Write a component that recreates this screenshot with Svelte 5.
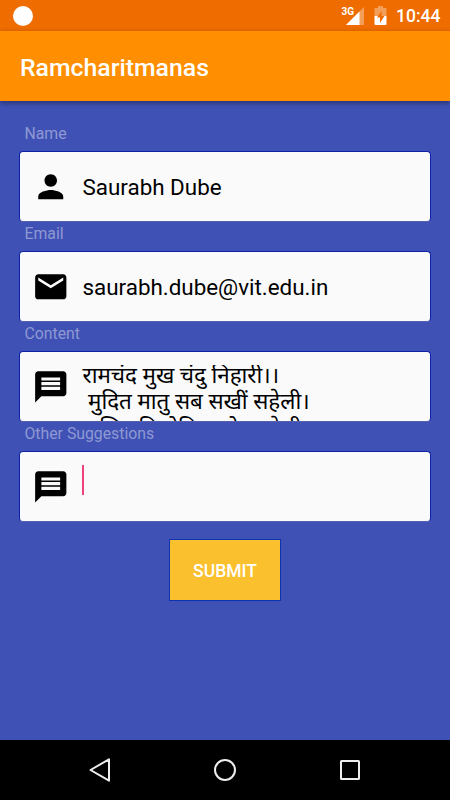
<script lang="ts">
  const icons = {
    person: 'M12 12c2.21 0 4-1.79 4-4s-1.79-4-4-4-4 1.79-4 4 1.79 4 4 4zm0 2c-2.67 0-8 1.34-8 4v2h16v-2c0-2.66-5.33-4-8-4z',
    email: 'M20 4H4c-1.1 0-1.99.9-1.99 2L2 18c0 1.1.9 2 2 2h16c1.1 0 2-.9 2-2V6c0-1.1-.9-2-2-2zm0 4l-8 5-8-5V6l8 5 8-5v2z',
    message: 'M20 2H4c-1.1 0-1.99.9-1.99 2L2 22l4-4h14c1.1 0 2-.9 2-2V4c0-1.1-.9-2-2-2zm-2 12H6v-2h12v2zm0-3H6V9h12v2zm0-3H6V6h12v2z',
  }

  const fields = [
    { label: 'Name', icon: icons.person, value: 'Saurabh Dube' },
    { label: 'Email', icon: icons.email, value: 'saurabh.dube@vit.edu.in' },
    {
      label: 'Content',
      icon: icons.message,
      lines: ['रामचंद मुख चंदु निहारी।।', ' मुदित मातु सब सखीं सहेली।', 'फलित बिलोकि मनोरथ बेली।।'],
    },
    { label: 'Other Suggestions', icon: icons.message, focused: true },
  ]
</script>

<div class="screen">
  <div class="status-bar">
    <span class="notif"></span>
    <svg class="signal" width="24" height="25" viewBox="0 0 24 25">
      <path d="M23 7v18H5z" fill="#fff" opacity="0.35" />
      <path d="M18.5 11.5V25H5z" fill="#fff" />
      <text x="0.5" y="14.8">3G</text>
    </svg>
    <svg class="battery" width="13" height="19" viewBox="0 0 13 19">
      <path d="M4 0h5v2h2.5q1 0 1 1v7H.5V3q0-1 1-1H4z" fill="#fff" opacity="0.35" />
      <path d="M.5 10h12v8q0 1-1 1h-10q-1 0-1-1z" fill="#fff" />
      <path d="M7.5 5L3 11.5h3V17l4.5-7h-3z" fill="#ef6c00" />
    </svg>
    <span class="clock">10:44</span>
  </div>

  <header class="app-bar">
    <h1>Ramcharitmanas</h1>
  </header>

  <main>
    {#each fields as field}
      <div class="label">{field.label}</div>
      <div class="field">
        <svg class="icon" viewBox="0 0 24 24"><path d={field.icon} /></svg>
        {#if field.lines}
          <div class="multiline">
            {#each field.lines as line}
              <div class="line">{line}</div>
            {/each}
          </div>
        {:else if field.focused}
          <span class="caret"></span>
        {:else}
          <span class="value">{field.value}</span>
        {/if}
      </div>
    {/each}
    <button class="submit">SUBMIT</button>
  </main>

  <nav class="nav-bar">
    <svg width="24" height="26" viewBox="0 0 24 26"><path d="M21 2.3v21.4L2.5 13z" /></svg>
    <svg width="24" height="26" viewBox="0 0 24 26"><circle cx="12" cy="13" r="10" /></svg>
    <svg width="24" height="26" viewBox="0 0 24 26"><rect x="3" y="4" width="18" height="18" rx="0.5" /></svg>
  </nav>
</div>

<style>
  :global(body) {
    background: #3f51b5;
  }

  .screen {
    width: 450px;
    height: 800px;
    display: flex;
    flex-direction: column;
    overflow: hidden;
    background: #3f51b5;
    font-family: Roboto, 'Noto Sans', sans-serif;
  }

  .status-bar {
    height: 31px;
    flex-shrink: 0;
    display: flex;
    align-items: flex-start;
    background: #ef6c00;
    color: #fff;
  }

  .notif {
    width: 20px;
    height: 20px;
    margin: 6px auto 0 12.5px;
    border-radius: 50%;
    background: #fff;
  }

  .signal {
    margin-right: 9px;
    overflow: visible;
  }

  .signal text {
    font-size: 10px;
    font-weight: 700;
    fill: #fff;
  }

  .battery {
    margin: 6px 9px 0 0;
  }

  .clock {
    width: 44px;
    margin-right: 10px;
    font-size: 17.5px;
    font-weight: 500;
    line-height: 33px;
  }

  .app-bar {
    height: 70px;
    flex-shrink: 0;
    padding: 0 20px;
    display: flex;
    align-items: center;
    background: #ff8f00;
    box-shadow: 0 2px 5px rgba(0, 0, 0, 0.4);
    z-index: 1;
  }

  h1 {
    margin: 2px 0 0;
    color: #fff;
    font-size: 24.8px;
    font-weight: 500;
  }

  main {
    flex: 1;
    padding: 21px 19px 0;
    display: flex;
    flex-direction: column;
  }

  .label {
    height: 29px;
    padding-left: 5.5px;
    color: #8e99d3;
    font-size: 15.8px;
    line-height: 23px;
  }

  .field {
    height: 69px;
    display: flex;
    align-items: flex-start;
    overflow: hidden;
    background: #fafafa;
    border: 1px solid #0d22a8;
    border-bottom-color: #5560b0;
    border-radius: 4px;
  }

  .icon {
    width: 37.5px;
    height: 37.5px;
    margin: 16px 12.8px 0 12.2px;
    flex-shrink: 0;
  }

  .value {
    color: #000;
    font-size: 22.4px;
    line-height: 70px;
  }

  .multiline {
    height: 56px;
    margin-top: 13px;
    overflow: hidden;
  }

  .line {
    color: #000;
    font-size: 22.4px;
    line-height: 26.5px;
    white-space: pre;
  }

  .line:first-child {
    margin-top: -3.5px;
  }

  .caret {
    width: 2px;
    height: 30px;
    margin-top: 13px;
    background: #f0427a;
  }

  .submit {
    width: 112px;
    height: 62px;
    margin: 17px auto 0;
    padding: 2px 0 0;
    background: #fbc02d;
    border: 1px solid #0d34b0;
    color: #fff;
    font: 500 17.5px Roboto, sans-serif;
  }

  .nav-bar {
    height: 60px;
    flex-shrink: 0;
    padding: 0 88px;
    display: flex;
    align-items: center;
    justify-content: space-between;
    background: #000;
  }

  .nav-bar svg {
    fill: none;
    stroke: #eee;
    stroke-width: 2;
    stroke-linejoin: round;
  }
</style>
